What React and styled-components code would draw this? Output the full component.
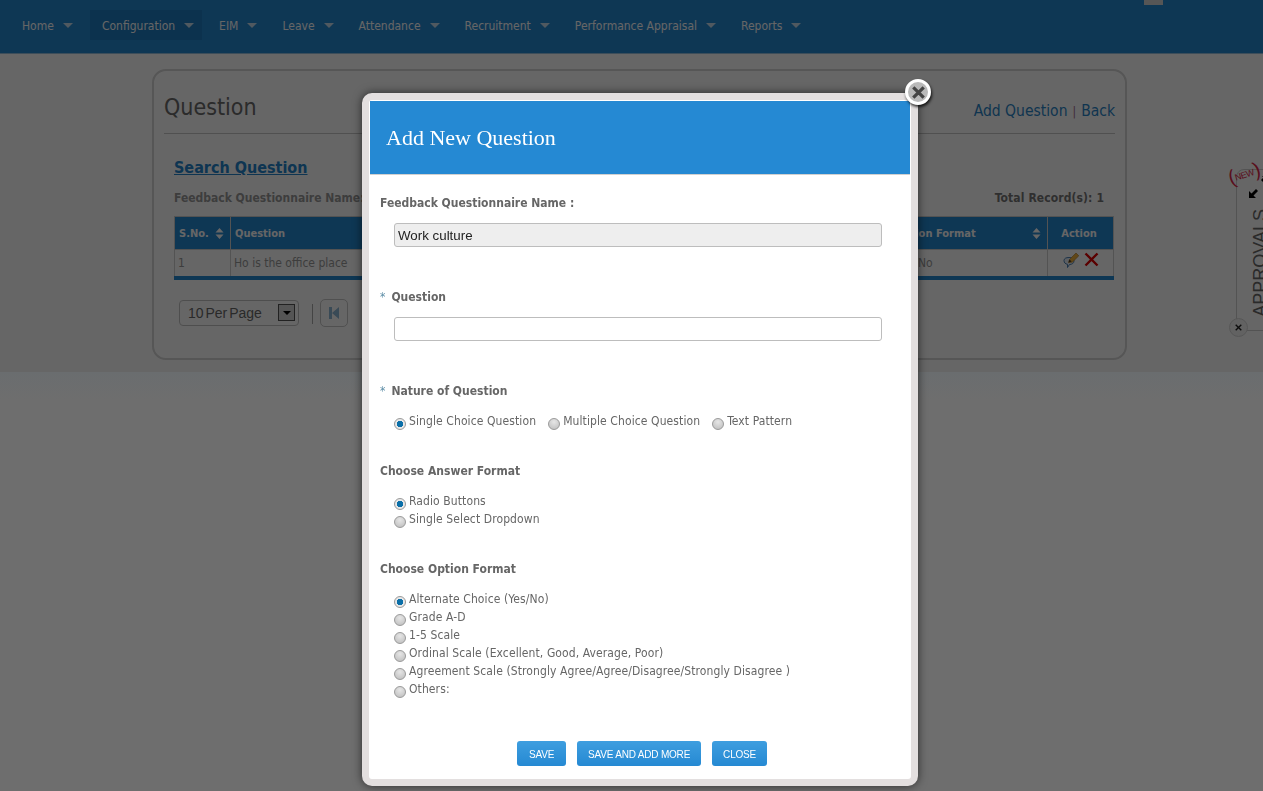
import styled, { createGlobalStyle } from 'styled-components';

const tahoma = `"DejaVu Sans Condensed", "DejaVu Sans", "Noto Sans", sans-serif`;

const navItems = [
  'Home',
  'Configuration',
  'EIM',
  'Leave',
  'Attendance',
  'Recruitment',
  'Performance Appraisal',
  'Reports',
];

const natureOptions = [
  { label: 'Single Choice Question', checked: true },
  { label: 'Multiple Choice Question' },
  { label: 'Text Pattern' },
];

const answerOptions = [
  { label: 'Radio Buttons', checked: true },
  { label: 'Single Select Dropdown' },
];

const formatOptions = [
  { label: 'Alternate Choice (Yes/No)', checked: true },
  { label: 'Grade A-D' },
  { label: '1-5 Scale' },
  { label: 'Ordinal Scale (Excellent, Good, Average, Poor)' },
  { label: 'Agreement Scale (Strongly Agree/Agree/Disagree/Strongly Disagree )' },
  { label: 'Others:' },
];

const GlobalStyle = createGlobalStyle`
  html, body {
    margin: 0;
    height: 100%;
    overflow: hidden;
  }
  body {
    background: linear-gradient(#6a6d6f 372px, #6e6e6e 400px);
    font-family: ${tahoma};
  }
  * {
    box-sizing: border-box;
  }
`;

const Page = styled.div`
  position: relative;
  width: 100%;
`;

const Header = styled.header`
  position: relative;
  height: 54px;
  background: #2589d3;
  border-bottom: 1px solid #99c3e0;
  padding: 10px 0 0 10px;
`;

const Nav = styled.nav`
  display: flex;
  gap: 5px;
`;

const NavItem = styled.a`
  display: flex;
  align-items: center;
  height: 30px;
  padding: 1px 8px 0 12px;
  gap: 9px;
  font-size: 12px;
  color: #fff;
  background: ${(props) => (props.$active ? '#1e7dc2' : 'transparent')};
  &:first-child {
    margin-right: 4px;
  }
`;

const Caret = styled.span`
  width: 0;
  height: 0;
  border-left: 5px solid transparent;
  border-right: 5px solid transparent;
  border-top: 5px solid #c8dff0;
`;

const TopTab = styled.div`
  position: absolute;
  left: 1144px;
  top: 0;
  width: 19px;
  height: 5px;
  background: #d8d8d8;
`;

const Content = styled.main`
  background: #fff;
  height: 318px;
  padding: 15px 136px 0 152px;
`;

const Panel = styled.section`
  width: 975px;
  height: 291px;
  border: 2px solid #d6d6d6;
  border-radius: 14px;
  padding: 0 10px;
`;

const PanelTop = styled.div`
  display: flex;
  justify-content: space-between;
  align-items: flex-end;
  height: 63px;
  border-bottom: 1px solid #c8c8c8;
  padding-bottom: 11px;
`;

const PageTitle = styled.h1`
  margin: 0;
  font-size: 23px;
  line-height: 30px;
  font-weight: 400;
  color: #6b6b6b;
`;

const TopLinks = styled.div`
  font-size: 15.5px;
  line-height: 20px;
  color: #2a85c8;
`;

const LinkDivider = styled.span`
  color: #a06a8a;
  font-size: 12px;
  margin: 0 5px;
`;

const PanelBody = styled.div`
  padding: 23px 0 0 10px;
`;

const SearchTitle = styled.h2`
  margin: 0;
  font-size: 16px;
  line-height: 22px;
  font-weight: 700;
  color: #2484cc;
  text-decoration: underline;
`;

const MetaRow = styled.div`
  display: flex;
  justify-content: space-between;
  margin-top: 10px;
  padding-right: 11px;
  font-size: 12px;
  line-height: 18px;
  font-weight: 700;
  color: #999;
`;

const TotalRecords = styled.span`
  color: #777;
  letter-spacing: 0.1px;
`;

const Table = styled.table`
  width: 940px;
  margin-top: 9px;
  border-collapse: collapse;
  table-layout: fixed;
  border-bottom: 4px solid #2589d3;
`;

const HeadCell = styled.th`
  position: relative;
  height: 33px;
  padding: 1px ${(props) => (props.$align === 'center' ? '7px' : '4px')} 0 4px;
  width: ${(props) => props.$width || 'auto'};
  background: #2589d3;
  border: 1px solid #cfcfcf;
  font-size: 11px;
  font-weight: 700;
  color: #fff;
  text-align: ${(props) => props.$align || 'left'};
`;

const SortIcon = styled.svg`
  position: absolute;
  right: 6px;
  top: 11px;
`;

const Cell = styled.td`
  height: 28px;
  padding: 1px 3px 0 ${(props) => props.$indent || 3}px;
  border: 1px solid #cfcfcf;
  border-bottom: 0;
  font-size: 12px;
  color: #999;
`;

const ActionIcons = styled.div`
  display: flex;
  justify-content: center;
  gap: 4px;
  margin-top: -5px;
`;

const Pager = styled.div`
  display: flex;
  align-items: center;
  margin: 19px 0 0 5px;
`;

const PerPage = styled.div`
  display: flex;
  align-items: center;
  justify-content: space-between;
  width: 120px;
  height: 26px;
  padding: 0 3px 0 8px;
  border: 1px solid #c4c4c4;
  border-radius: 4px;
  font-family: "Liberation Sans", sans-serif;
  font-size: 14px;
  word-spacing: -2px;
  color: #6a6a6a;
`;

const SelectArrow = styled.span`
  display: flex;
  align-items: center;
  justify-content: center;
  width: 17px;
  height: 17px;
  border: 1px solid #555;
  background: #d4d4d4;
`;

const SelectCaret = styled.span`
  width: 0;
  height: 0;
  border-left: 4px solid transparent;
  border-right: 4px solid transparent;
  border-top: 4px solid #000;
`;

const PagerRule = styled.span`
  width: 1px;
  height: 20px;
  margin: 2px 7px 0 13px;
  background: #aaa;
`;

const PagerButton = styled.span`
  display: flex;
  align-items: center;
  justify-content: center;
  width: 28px;
  height: 28px;
  border: 1px solid #c8c8c8;
  border-radius: 5px;
`;

const SideTab = styled.aside`
  position: absolute;
  left: 1236px;
  top: 169px;
  width: 60px;
  height: 162px;
  border: 1px solid #d0d0d0;
  border-radius: 8px;
`;

const SideText = styled.span`
  position: absolute;
  left: 13px;
  bottom: 13px;
  writing-mode: vertical-rl;
  transform: rotate(180deg);
  font-family: "Liberation Sans", sans-serif;
  font-size: 18px;
  line-height: 20px;
  color: #6a6a6a;
`;

const NewBadge = styled.span`
  position: absolute;
  left: -9px;
  top: -7px;
  font-family: "Liberation Sans", sans-serif;
  font-size: 9px;
  line-height: 20px;
  letter-spacing: -0.4px;
  color: #e0264a;
  transform: rotate(-18deg);
`;

const Paren = styled.b`
  font-size: 20px;
  font-weight: 400;
  vertical-align: -2px;
`;

const SideArrow = styled.svg`
  position: absolute;
  left: 11px;
  top: 17px;
`;

const CornerArrow = styled.svg`
  position: absolute;
  left: 24px;
  top: 6px;
`;

const SideClose = styled.span`
  position: absolute;
  left: -8px;
  top: 148px;
  display: flex;
  align-items: center;
  justify-content: center;
  width: 19px;
  height: 19px;
  border: 1px solid #d8d8d8;
  border-radius: 50%;
  background: #f4f4f4;
`;

const Overlay = styled.div`
  position: absolute;
  inset: 0;
  background: rgba(0, 0, 0, 0.6);
`;

const Modal = styled.div`
  position: fixed;
  left: 362px;
  top: 93px;
  width: 556px;
  height: 693px;
  padding: 1px;
  background: #fff;
  border: 7px solid #e3dfdf;
  border-radius: 10px;
  box-shadow: 0 0 10px rgba(0, 0, 0, 0.6);
`;

const CloseButton = styled.span`
  position: absolute;
  right: -20px;
  top: -21px;
  display: flex;
  align-items: center;
  justify-content: center;
  width: 26px;
  height: 26px;
  border: 3px solid #fff;
  border-radius: 50%;
  background: #b9b9b9;
  box-shadow: 1px 2px 3px rgba(0, 0, 0, 0.8);
`;

const ModalHeader = styled.div`
  display: flex;
  align-items: center;
  height: 74px;
  padding: 1px 0 0 16px;
  background: #2589d3;
  border-bottom: 1px solid #d0d0d0;
`;

const ModalTitle = styled.h2`
  margin: 0;
  font-family: "Liberation Serif", serif;
  font-size: 22px;
  font-weight: 400;
  color: #fff;
`;

const Form = styled.form`
  padding: 18px 10px 0;
`;

const Section = styled.div`
  margin-bottom: ${(props) => props.$after}px;
`;

const Label = styled.div`
  height: 18px;
  padding-top: 1px;
  font-size: 12px;
  line-height: 18px;
  font-weight: 700;
  color: #666;
`;

const Required = styled.span`
  color: #5f8fa8;
  font-weight: 400;
  margin-right: 6px;
`;

const Input = styled.input`
  display: block;
  width: 488px;
  height: 24px;
  margin: 12px 0 0 14px;
  padding: 0 3px;
  border: 1px solid #bdbdbd;
  border-radius: 3px;
  background: ${(props) => (props.readOnly ? '#eeeeee' : '#fff')};
  font-family: "Liberation Sans", sans-serif;
  font-size: 13.33px;
  color: #222;
`;

const RadioGroup = styled.div`
  display: flex;
  flex-direction: ${(props) => (props.$inline ? 'row' : 'column')};
  gap: ${(props) => (props.$inline ? '12px' : '0')};
  margin: 13px 0 0 14px;
`;

const RadioRow = styled.label`
  display: flex;
  height: 18px;
  gap: 3px;
  font-size: 12px;
  line-height: 18px;
  letter-spacing: 0.1px;
  color: #666;
`;

const RadioDot = styled.span`
  flex: none;
  width: 12px;
  height: 12px;
  margin-top: 6px;
  border: 1px solid #9a9a9a;
  border-radius: 50%;
  background: ${(props) =>
    props.$checked
      ? 'radial-gradient(circle, #0b6fa8 0 3px, #e8e8e8 3.5px)'
      : 'radial-gradient(circle at 50% 30%, #e6e6e6, #bcbcbc)'};
`;

const Buttons = styled.div`
  display: flex;
  justify-content: center;
  gap: 11px;
  margin-top: 43px;
  padding-left: 4px;
`;

const Button = styled.button`
  height: 25px;
  padding: 1px ${(props) => props.$pad}px 0;
  border: 0;
  border-radius: 3px;
  background: linear-gradient(#3e9edf, #2589d3);
  font-family: "Liberation Sans", sans-serif;
  font-size: 10px;
  letter-spacing: -0.2px;
  color: #fff;
  text-transform: uppercase;
`;

function Radios({ options, inline }) {
  return (
    <RadioGroup $inline={inline}>
      {options.map((option) => (
        <RadioRow key={option.label}>
          <RadioDot $checked={option.checked} />
          {option.label}
        </RadioRow>
      ))}
    </RadioGroup>
  );
}

function CrossIcon({ size = 10, color = '#000', width = 2 }) {
  return (
    <svg width={size} height={size} viewBox="0 0 10 10">
      <path d="M1 1L9 9M9 1L1 9" stroke={color} strokeWidth={width} fill="none" />
    </svg>
  );
}

function SortArrows() {
  return (
    <SortIcon width="9" height="11" viewBox="0 0 9 11">
      <path d="M4.5 0L8.5 4.5H.5zM4.5 11L.5 6.5H8.5z" fill="#fff" />
    </SortIcon>
  );
}

function EditIcon() {
  return (
    <svg width="17" height="17" viewBox="0 0 17 17">
      <path
        d="M1 8.5C1 6.5 3 5.5 6 5.5C9 5.5 11 6.8 11 9C11 11.2 9 12.5 6.5 12.5L4.5 15.5V12.3C2.3 12 1 10.6 1 8.5Z"
        fill="#e8f0f8"
        stroke="#4a7fb5"
      />
      <path d="M5.5 10.5L6.5 7.5L13 1L15.8 3.8L9.3 10.2Z" fill="#f2b23a" stroke="#a8782a" strokeWidth=".6" />
      <path d="M5.5 10.5L6.5 7.5L8.6 9.6Z" fill="#4a3a22" />
    </svg>
  );
}

export default function App() {
  return (
    <>
      <GlobalStyle />
      <Page>
        <Header>
          <Nav>
            {navItems.map((item) => (
              <NavItem key={item} $active={item === 'Configuration'}>
                {item}
                <Caret />
              </NavItem>
            ))}
          </Nav>
          <TopTab />
        </Header>
        <Content>
          <Panel>
            <PanelTop>
              <PageTitle>Question</PageTitle>
              <TopLinks>
                Add Question
                <LinkDivider>|</LinkDivider>
                Back
              </TopLinks>
            </PanelTop>
            <PanelBody>
              <SearchTitle>Search Question</SearchTitle>
              <MetaRow>
                <span>Feedback Questionnaire Name:</span>
                <TotalRecords>Total Record(s): 1</TotalRecords>
              </MetaRow>
              <Table>
                <thead>
                  <tr>
                    <HeadCell $width="56px">
                      S.No.
                      <SortArrows />
                    </HeadCell>
                    <HeadCell $width="660px">Question</HeadCell>
                    <HeadCell $width="157px">
                      Option Format
                      <SortArrows />
                    </HeadCell>
                    <HeadCell $align="center">Action</HeadCell>
                  </tr>
                </thead>
                <tbody>
                  <tr>
                    <Cell>1</Cell>
                    <Cell>Ho is the office place</Cell>
                    <Cell $indent={6}>Yes/No</Cell>
                    <Cell>
                      <ActionIcons>
                        <EditIcon />
                        <CrossIcon size={15} color="#e00000" width={1.6} />
                      </ActionIcons>
                    </Cell>
                  </tr>
                </tbody>
              </Table>
              <Pager>
                <PerPage>
                  10 Per Page
                  <SelectArrow>
                    <SelectCaret />
                  </SelectArrow>
                </PerPage>
                <PagerRule />
                <PagerButton>
                  <svg width="12" height="14" viewBox="0 0 12 14">
                    <path d="M1 1H4V13H1zM4 7L11 1V13z" fill="#8fb8d6" />
                  </svg>
                </PagerButton>
              </Pager>
            </PanelBody>
          </Panel>
        </Content>
        <SideTab>
          <NewBadge>
            <Paren>(</Paren>NEW<Paren>)</Paren>
          </NewBadge>
          <CornerArrow width="6" height="10" viewBox="0 0 6 10">
            <path d="M1 0H6V5L4.5 3.5L2 6L0 4L2.5 1.5Z" fill="#000" />
          </CornerArrow>
          <SideArrow width="12" height="12" viewBox="0 0 12 12">
            <path d="M1 11V4L3.5 6.5L8 2L10 4L5.5 8.5L8 11Z" fill="#000" />
          </SideArrow>
          <SideText>APPROVALS</SideText>
          <SideClose>
            <CrossIcon size={7} color="#222" />
          </SideClose>
        </SideTab>
        <Overlay />
      </Page>
      <Modal>
        <CloseButton>
          <CrossIcon size={13} color="#444" width={2.5} />
        </CloseButton>
        <ModalHeader>
          <ModalTitle>Add New Question</ModalTitle>
        </ModalHeader>
        <Form>
          <Section $after={40}>
            <Label>Feedback Questionnaire Name :</Label>
            <Input readOnly value="Work culture" />
          </Section>
          <Section $after={40}>
            <Label>
              <Required>*</Required>Question
            </Label>
            <Input />
          </Section>
          <Section $after={31}>
            <Label>
              <Required>*</Required>Nature of Question
            </Label>
            <Radios options={natureOptions} inline />
          </Section>
          <Section $after={31}>
            <Label>Choose Answer Format</Label>
            <Radios options={answerOptions} />
          </Section>
          <Section $after={0}>
            <Label>Choose Option Format</Label>
            <Radios options={formatOptions} />
          </Section>
          <Buttons>
            <Button type="button" $pad={12}>Save</Button>
            <Button type="button" $pad={11}>Save and add more</Button>
            <Button type="button" $pad={11}>Close</Button>
          </Buttons>
        </Form>
      </Modal>
    </>
  );
}
